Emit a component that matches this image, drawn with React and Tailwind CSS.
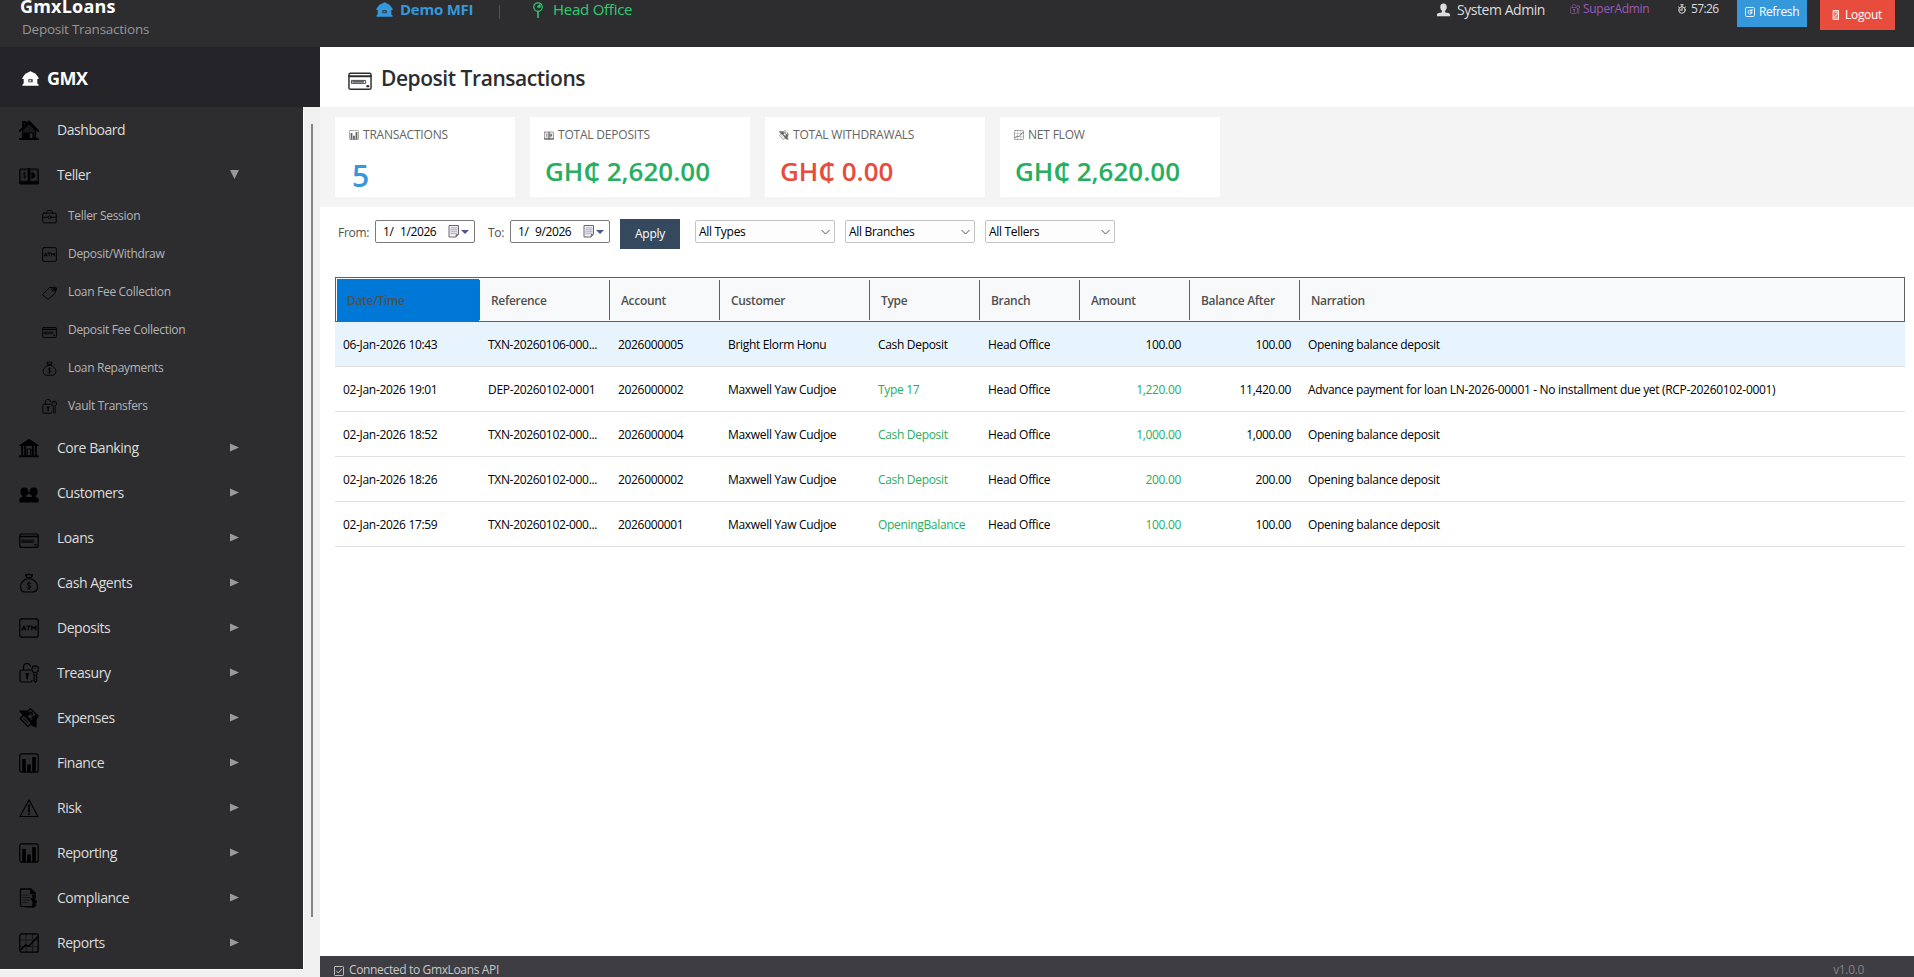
const base = { fill: 'none', stroke: 'currentColor', strokeWidth: 1.2, strokeLinejoin: 'round', strokeLinecap: 'round' };

const icons = {
  house: (
    <g {...base}>
      <path d="M.8 11 10 1.500 19.200 11M4 8V2h2.500v3" strokeWidth="1.800" />
      <path d="M3.500 10 10 3.500l6.500 6.500V18H14v-5h-4v5H3.500z" fill="currentColor" fillOpacity=".45" />
      <path d="M10 13v5H5v-5z" fill="currentColor" />
      <path d="M1 19h18" strokeWidth="1.800" />
    </g>
  ),
  lodge: (
    <path d="M10 1.500 16 4.500 19.500 9v1.500h-1.500V16l1.500 1v1.500H.500V17L2 16v-5.500H.500V9L4 4.500zM7.500 11v3.500h5V11zM8.500 12.200h2.500v1.200H8.500z" fill="currentColor" fillRule="evenodd" />
  ),
  notes: (
    <g {...base}>
      <rect x=".8" y="4" width="18.400" height="15" rx="1" />
      <path d="M1 17.500h18" strokeWidth="2.400" />
      <path d="M10 4v14" strokeWidth="2.400" />
      <path d="M11.500 5.500h6.500v10h-6.500zM2.500 5.500h5.500v10H2.500z" strokeWidth=".6" strokeOpacity=".6" />
      <path d="M6.800 8.500c-1-.800-2.800-.400-2.800.700 0 1.500 2.800.900 2.800 2.500 0 1.100-1.800 1.500-2.900.600M5.400 7.300v6.200" strokeWidth=".8" />
      <path d="M12.500 7.500c2.200 0 3.500 1.300 3.500 3s-1.300 3-3.500 3z" fill="currentColor" strokeWidth=".6" />
    </g>
  ),
  briefcase: (
    <g {...base}>
      <rect x="1" y="5.500" width="18" height="13" rx="1.500" />
      <path d="M6 5.500C6 3 7 2 8 2h4c1 0 2 1 2 3.500M1 11h6.500M12.500 11H19" />
      <circle cx="10" cy="11" r="2" />
    </g>
  ),
  atm: (
    <g {...base}>
      <rect x=".8" y=".8" width="18.400" height="18.400" rx="2" />
      <path d="m3 12 1.900-4 1.900 4M3.600 11h2.600M7.500 8h4M9.500 8v4M12.800 12V8l2 2.500 2-2.500v4" />
    </g>
  ),
  tag: (
    <g {...base}>
      <path d="m1 12.500 9-9 6.500-.500 1.500 1.500-.500 6.500-9 8z" />
      <circle cx="15" cy="6" r="2" />
      <path d="m15 6 3-3 1.500 1-.500 3" />
    </g>
  ),
  card: (
    <g {...base}>
      <rect x=".8" y="6" width="18.400" height="13.400" rx="1.300" />
      <path d="M1 8.500h18" strokeWidth="1.600" />
      <path d="M3.200 12h11.500v2.500H3.200z" strokeWidth=".7" />
      <path d="M4 13.200h9" strokeWidth="1.100" />
      <path d="M16.300 16.800h.400" strokeWidth="2" />
    </g>
  ),
  bag: (
    <g {...base}>
      <path d="M7.500 6C3 8 1.500 11 1.500 14c0 3.500 2 5 5 5h7c3 0 5-1.500 5-5 0-3-1.500-6-6-8zM7.500 4.500h5M7.500 4 6.500 1.500l2 .500 1.500-1 1.500 1 2-.500-1 2.500" />
      <path d="M12 10.500C11 9.500 8.200 9.700 8.200 11.300c0 1.700 3.700 1 3.700 2.700 0 1.500-2.700 1.800-3.900.700M10 9v7.500" strokeWidth=".9" />
    </g>
  ),
  vault: (
    <g {...base}>
      <path d="M13 17.500c0 1-.500 1.500-1.500 1.500H2.500C1.500 19 1 18.500 1 17.500v-9C1 7.500 1.500 7 2.500 7H11.500M4.500 7V4.500a3.500 3.500 0 0 1 7-1M15 10.500v7l1.500 1.800L18 17.500l-1-1.500 1-1.500-1-1.500 1-2.500" />
      <circle cx="16.200" cy="6.200" r="3.300" />
      <path d="M7.300 11h1.800M8.200 11v4.500" strokeWidth="1.800" />
      <path d="M16.200 5v.500" />
    </g>
  ),
  bank: (
    <g {...base}>
      <path d="M1 7.500 10 1.500l9 6z" fill="currentColor" />
      <path d="M3.200 8v9M6.200 8v9M13.800 8v9M16.800 8v9" strokeWidth="1.900" />
      <path d="M8.200 17v-6h3.600v6" />
      <path d="M1 18.300h18" strokeWidth="2" />
    </g>
  ),
  people: (
    <g fill="currentColor">
      <ellipse cx="5.300" cy="8.800" rx="3.900" ry="4.300" />
      <ellipse cx="14.700" cy="8.800" rx="3.900" ry="4.300" />
      <path d="M.300 19.500v-3C.800 14.500 2 14.300 3.500 14V12h3.500v2h6v-2h3.500v2c1.500.300 2.700.500 3.200 2.500v3zM8 9h4v1.800H8z" />
    </g>
  ),
  person: (
    <path d="M10 0c3.500 0 5 2.200 5 5.500 0 2.500-1 4.500-2.500 5.500v2.500C15 14.500 20 14.500 20 17v2.500H0V17c0-2.500 5-2.500 7.500-3.500V11C6 10 5 8 5 5.500 5 2.200 6.500 0 10 0z" fill="currentColor" />
  ),
  wings: (
    <g {...base}>
      <path d="M1 3h7L4.500 7zM17 19l-5-2.500 5-5z" fill="currentColor" />
      <path d="M1.200 10.500 11.500.800l7.700 7.400L9 18.500z" />
      <path d="m5.500 6.800 8 8M5 7l5-1M12 14l5-4" strokeWidth="2.600" />
      <path d="M9 5.500c2-2.500 5-.500 4 1.500M13 10l4.500-2.500" strokeWidth="1.700" />
      <path d="m4.500 10.500 4.500 4" strokeOpacity=".6" />
    </g>
  ),
  bars: (
    <g {...base}>
      <rect x=".8" y=".8" width="18.400" height="18.400" rx="2" />
      <path d="M5 6v13M10 11.500v7.500M15 4v15" strokeWidth="3.600" strokeLinecap="butt" />
    </g>
  ),
  warning: (
    <g {...base}>
      <path d="M10 2 1 18.500h18z" />
      <path d="M10 7v7M10 16v.500" strokeWidth="1.600" />
    </g>
  ),
  scroll: (
    <g {...base}>
      <path d="M12 1H1.500v17c4 1.300 9 .500 13 .800v-2M12 1l4.500 4.500" strokeWidth="1.300" />
      <path d="M11.500 1v4.800h4.800zM13.500 7h3v3h-2zM12.500 10.500h2.500l3 3.500-2 1.500 1 2-2 1.500h-2l1-4z" fill="currentColor" strokeWidth=".8" />
      <path d="M4 7h6M4 9.500h7M4 12h7M4 14.500h5" strokeOpacity=".5" />
    </g>
  ),
  trend: (
    <g {...base}>
      <rect x=".8" y=".8" width="18.400" height="18.400" rx="2" />
      <path d="M7 1v18M13.500 1v18M1 7h18M1 13.500h18" strokeOpacity=".45" />
      <path d="m2 16.500 4.500-4.500 3 1.500L18.500 4" strokeWidth="1.600" />
    </g>
  ),
  pin: (
    <g {...base} strokeWidth="1.500">
      <circle cx="10" cy="6.300" r="5.300" />
      <path d="M10 12v7.500" strokeWidth="2" />
      <path d="M9.500 6 12.500 3.500v3z" fill="currentColor" />
    </g>
  ),
  timer: (
    <g {...base} strokeWidth="2">
      <circle cx="10" cy="12" r="6.500" />
      <path d="M10 12V8M10 5V2M7.500 1.500h5M3 6l1.500 1M17 6l-1.500 1M6 12h4" />
    </g>
  ),
  refresh: (
    <g {...base} strokeWidth="1.700">
      <rect x="1" y="1" width="18" height="18" rx="2.500" />
      <path d="M14 7.500C12 5 6 5.500 6 10s6 5.500 8 2.500v-2h-3.500M14 5v3h-3" />
    </g>
  ),
  door: (
    <g {...base} strokeWidth="1.800">
      <rect x="5" y="1" width="10" height="18" fill="currentColor" fillOpacity=".25" />
      <path d="M7.500 4h5v5l-5 3v4h5" strokeOpacity=".7" />
    </g>
  ),
  check: (
    <g {...base} strokeWidth="1.800">
      <rect x="1" y="1" width="18" height="18" rx="1.500" />
      <path d="m5 10 3.500 4L15.500 6" />
    </g>
  ),
};

const Icon = ({ name, className }) => (
  <svg viewBox="0 0 20 20" className={`shrink-0 ${className}`}>{icons[name]}</svg>
);

const tellerItems = [
  ['briefcase', 'Teller Session'],
  ['atm', 'Deposit/Withdraw'],
  ['tag', 'Loan Fee Collection'],
  ['card', 'Deposit Fee Collection'],
  ['bag', 'Loan Repayments'],
  ['vault', 'Vault Transfers'],
];

const menuItems = [
  ['bank', 'Core Banking'],
  ['people', 'Customers'],
  ['card', 'Loans'],
  ['bag', 'Cash Agents'],
  ['atm', 'Deposits'],
  ['vault', 'Treasury'],
  ['wings', 'Expenses'],
  ['bars', 'Finance'],
  ['warning', 'Risk'],
  ['bars', 'Reporting'],
  ['scroll', 'Compliance'],
  ['trend', 'Reports'],
];

const stats = [
  { icon: 'bars', label: 'TRANSACTIONS', value: '5', width: 'w-[180px]', color: 'text-[#3498db]', big: true },
  { icon: 'notes', label: 'TOTAL DEPOSITS', value: 'GH₵ 2,620.00', width: 'w-[220px]', color: 'text-[#27ae60]' },
  { icon: 'wings', label: 'TOTAL WITHDRAWALS', value: 'GH₵ 0.00', width: 'w-[220px]', color: 'text-[#e74c3c]' },
  { icon: 'trend', label: 'NET FLOW', value: 'GH₵ 2,620.00', width: 'w-[220px]', color: 'text-[#27ae60]' },
];

const columns = ['Date/Time', 'Reference', 'Account', 'Customer', 'Type', 'Branch', 'Amount', 'Balance After', 'Narration'];

const rows = [
  ['06-Jan-2026 10:43', 'TXN-20260106-000...', '2026000005', 'Bright Elorm Honu', 'Cash Deposit', 'Head Office', '100.00', '100.00', 'Opening balance deposit'],
  ['02-Jan-2026 19:01', 'DEP-20260102-0001', '2026000002', 'Maxwell Yaw Cudjoe', 'Type 17', 'Head Office', '1,220.00', '11,420.00', 'Advance payment for loan LN-2026-00001 - No installment due yet (RCP-20260102-0001)'],
  ['02-Jan-2026 18:52', 'TXN-20260102-000...', '2026000004', 'Maxwell Yaw Cudjoe', 'Cash Deposit', 'Head Office', '1,000.00', '1,000.00', 'Opening balance deposit'],
  ['02-Jan-2026 18:26', 'TXN-20260102-000...', '2026000002', 'Maxwell Yaw Cudjoe', 'Cash Deposit', 'Head Office', '200.00', '200.00', 'Opening balance deposit'],
  ['02-Jan-2026 17:59', 'TXN-20260102-000...', '2026000001', 'Maxwell Yaw Cudjoe', 'OpeningBalance', 'Head Office', '100.00', '100.00', 'Opening balance deposit'],
];

const TopBar = () => (
  <header className="h-[47px] shrink-0 flex items-start bg-[#2d2d30] overflow-hidden">
    <div className="w-[376px] pl-5">
      <div className="-mt-[7px] h-[26px] leading-[26px] text-lg tracking-[0.2px] font-bold text-white">GmxLoans</div>
      <div className="pl-0.5 h-5 leading-5 text-[13.5px] tracking-[-0.25px] text-[#969696]">Deposit Transactions</div>
    </div>
    <div className="flex items-center h-[19px] text-[15px] tracking-[-0.25px]">
      <Icon name="lodge" className="w-[17px] h-[17px] text-[#3498db]" />
      <span className="ml-[7px] w-[99px] font-bold text-[#3498db]">Demo MFI</span>
      <span className="w-px h-3.5 mt-1 bg-[#505054]" />
      <Icon name="pin" className="ml-[30px] w-4 h-4 text-[#2ecc71]" />
      <span className="ml-[7px] text-[#2ecc71]">Head Office</span>
    </div>
    <div className="ml-auto mr-[19px] flex items-start text-xs tracking-[-0.3px] text-[#dcdcdc]">
      <Icon name="person" className="mt-[3px] w-[13px] h-[14px]" />
      <span className="ml-[7px] w-[113px] leading-5 text-sm tracking-[-0.45px]">System Admin</span>
      <Icon name="vault" className="mt-1 w-[10px] h-[10px] text-[#9b59b6]" />
      <span className="ml-[3px] w-[94px] leading-[18px] text-[#9b59b6]">SuperAdmin</span>
      <Icon name="timer" className="mt-1 w-[10px] h-[10px]" />
      <span className="ml-[4px] w-[46px] leading-[18px] tracking-[-0.6px]">57:26</span>
      <button className="w-[70px] h-[27px] flex items-center pl-2 pb-[3px] gap-1 bg-[#3498db] text-white tracking-[-0.4px]">
        <Icon name="refresh" className="w-[10px] h-[10px]" />
        Refresh
      </button>
      <button className="ml-[13px] w-[75px] h-[30px] flex items-center pl-[11px] gap-1 bg-[#e74c3c] text-white">
        <Icon name="door" className="w-[10px] h-[10px]" />
        Logout
      </button>
    </div>
  </header>
);

const MenuRow = ({ icon, label, arrow }) => (
  <div className="h-[45px] flex items-center pl-[19px] text-sm tracking-[-0.45px] text-[#dcdcdc]">
    <Icon name={icon} className="w-5 h-5 text-black" />
    <span className="ml-[18px] w-[174px]">{label}</span>
    {arrow === 'down' && (
      <svg viewBox="0 0 10 10" className="-ml-px w-[9px] h-[9px] text-[#999]"><path d="M0 0h10L5 10z" fill="currentColor" /></svg>
    )}
    {arrow === 'right' && (
      <svg viewBox="0 0 10 10" className="-ml-px -mt-px w-[9px] h-[9px] text-[#999]"><path d="M0 .5v9L10 5z" fill="currentColor" /></svg>
    )}
  </div>
);

const Sidebar = () => (
  <aside className="w-80 shrink-0 flex flex-col bg-[#f0f0f0]">
    <div className="h-[60px] shrink-0 flex items-center pl-[22px] pt-0.5 bg-[#252428] text-white">
      <Icon name="lodge" className="w-[17px] h-[17px]" />
      <span className="ml-2 text-lg tracking-[-0.5px] font-bold">GMX</span>
    </div>
    <div className="flex">
      <nav className="w-[304px] h-[863px] bg-[#2d2d30] border-r border-b border-white">
        <MenuRow icon="house" label="Dashboard" />
        <MenuRow icon="notes" label="Teller" arrow="down" />
        {tellerItems.map(([icon, label]) => (
          <div key={label} className="h-[38px] flex items-center pl-[42px] text-xs tracking-[-0.31px] text-[#b4b4b4]">
            <Icon name={icon} className="w-[15px] h-[15px] text-black" />
            <span className="ml-[11px] -mt-px">{label}</span>
          </div>
        ))}
        {menuItems.map(([icon, label]) => (
          <MenuRow key={label} icon={icon} label={label} arrow="right" />
        ))}
      </nav>
      <div className="ml-[7px] mt-[17px] w-0.5 h-[793px] bg-[#858585]" />
    </div>
  </aside>
);

const StatCard = ({ icon, label, value, width, color, big }) => (
  <div className={`h-20 bg-white pl-3.5 ${width}`}>
    <div className="flex items-center pt-[9px] h-[27px] text-xs tracking-[-0.2px] text-[#646464]">
      <Icon name={icon} className="w-[10px] h-[10px] mr-1" />
      {label}
    </div>
    {big ? (
      <div className={`pl-[3px] pt-[10px] text-[30px] leading-[44px] font-semibold ${color}`}>{value}</div>
    ) : (
      <div className={`pl-px pt-[9px] text-[26px] leading-[36px] font-semibold whitespace-nowrap ${color}`}>{value}</div>
    )}
  </div>
);

const DateInput = ({ month, rest }) => (
  <div className="w-[100px] h-[23px] flex items-center pl-[7px] border border-[#7a7a7a] rounded-[2px] bg-white text-xs tracking-[-0.4px] text-black">
    <span className="w-[17px]">{month}</span>
    <span className="w-[48px]">{rest}</span>
    <svg viewBox="0 0 12 13" className="w-3 h-[13px]">
      <path d="M1 .5h9.500v9L8 12H1z" fill="#f4f4fa" stroke="#6f6468" />
      <path d="M3 2.500h6M3 4.500h6M3 6.500h6M3 8.500h6M3 2.500v7M5 2.500v7M7 2.500v7M9 2.500v6" stroke="#a9adc4" strokeWidth=".7" />
      <path d="M8 12V9.500h2.500" fill="#8a8084" stroke="#6f6468" strokeWidth=".6" />
    </svg>
    <svg viewBox="0 0 8 4" className="ml-px w-2 h-1"><path d="M0 0h8L4 4z" fill="#44598c" /></svg>
  </div>
);

const Select = ({ label, className }) => (
  <div className={`h-[23px] flex items-center justify-between pl-[3px] pr-1 border border-[#c4c4c4] rounded-[2px] bg-[#fdfdfd] text-xs tracking-[-0.3px] text-black ${className}`}>
    {label}
    <svg viewBox="0 0 9 6" className="w-[9px] h-[6px]"><path d="m.5 1 4 4 4-4" fill="none" stroke="#555" /></svg>
  </div>
);

const TransactionTable = () => (
  <div className="mt-7 ml-[15px] mr-[9px] text-xs tracking-[-0.32px]">
    <div className="h-[45px] grid grid-cols-[144px_130px_110px_150px_110px_100px_110px_110px_1fr] border border-[#5f5f64] bg-[#f8f9fa] font-semibold text-[#505050]">
      {columns.map((col, i) => (
        <div key={col} className="flex items-start">
          <div className={`flex-1 flex items-center ${i === 0 ? 'mt-px h-[42px] ml-px pl-2.5 pt-0.5 bg-[#0078d7]' : 'mt-0.5 h-10 pl-[11px] pt-0.5'}`}>{col}</div>
          {i < 8 && <div className="mt-0.5 w-px h-10 bg-[#5f5f64]" />}
        </div>
      ))}
    </div>
    {rows.map((row, r) => (
      <div
        key={r}
        className={`h-[45px] pt-px grid grid-cols-[145px_130px_110px_150px_110px_100px_110px_110px_1fr] items-center border-b border-[#e1e1e1] text-black whitespace-nowrap ${r === 0 ? 'bg-[#e8f4fd]' : 'bg-white'}`}
      >
        {row.map((cell, i) => (
          <div key={i} className={`pl-2 pr-[9px] ${i === 6 || i === 7 ? 'text-right' : ''} ${r > 0 && (i === 4 || i === 6) ? 'text-[#27ae60]' : ''}`}>
            {cell}
          </div>
        ))}
      </div>
    ))}
  </div>
);

export default function App() {
  return (
    <div className="w-[1914px] h-[977px] flex flex-col overflow-hidden bg-white font-['Open_Sans','Noto_Sans',sans-serif]">
      <TopBar />
      <div className="flex-1 min-h-0 flex">
        <Sidebar />
        <main className="flex-1 flex flex-col">
          <div className="h-[60px] shrink-0 flex items-center pl-7 text-[#2d2d30]">
            <Icon name="card" className="w-6 h-6 mt-px" />
            <h1 className="ml-[9px] mt-[3px] text-[21px] tracking-[-0.45px] font-semibold">Deposit Transactions</h1>
          </div>
          <div className="h-[100px] shrink-0 flex gap-[15px] pl-[15px] pt-2.5 bg-[#f4f4f4]">
            {stats.map((s) => <StatCard key={s.label} {...s} />)}
          </div>
          <div className="flex items-start h-[42px] pt-3 pl-[18px] text-xs tracking-[-0.27px] text-[#505050]">
            <span className="mt-1 w-[37px] leading-5">From:</span>
            <div className="mt-px"><DateInput month="1/" rest="1/2026" /></div>
            <span className="mt-1 ml-[13px] w-[22px] leading-5">To:</span>
            <div className="mt-px"><DateInput month="1/" rest="9/2026" /></div>
            <button className="ml-2.5 mr-[15px] w-[60px] h-[30px] bg-[#34495e] text-white">Apply</button>
            <div className="mt-px flex gap-2.5">
              <Select label="All Types" className="w-[140px]" />
              <Select label="All Branches" className="w-[130px]" />
              <Select label="All Tellers" className="w-[130px]" />
            </div>
          </div>
          <TransactionTable />
          <footer className="mt-auto h-[21px] flex items-start pl-3.5 pt-1 pr-[50px] bg-[#3e3d42] text-xs leading-5 tracking-[-0.35px] text-[#c8c8c8]">
            <Icon name="check" className="mt-1.5 w-[10px] h-[10px] mr-[5px]" />
            <span>Connected to GmxLoans API</span>
            <span className="ml-auto text-[#828282]">v1.0.0</span>
          </footer>
        </main>
      </div>
    </div>
  );
}
